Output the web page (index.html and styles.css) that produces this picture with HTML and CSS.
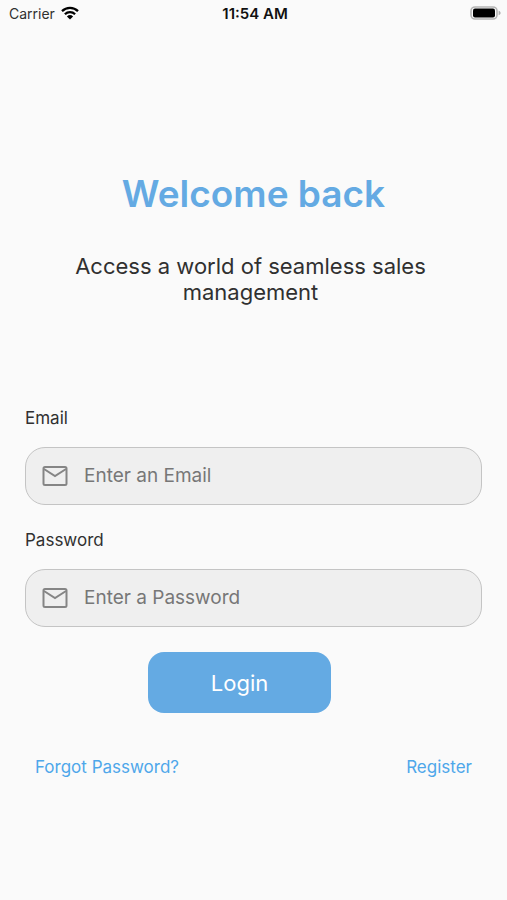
FILE: index.html
```html
<!DOCTYPE html>
<html lang="en">
<head>
<meta charset="utf-8">
<meta name="viewport" content="width=device-width, initial-scale=1">
<title>Login</title>
<link rel="stylesheet" href="styles.css">
</head>
<body>
<header class="status">
  <div class="status-side">
    <span>Carrier</span>
    <svg class="wifi" viewBox="0 0 18 14" aria-hidden="true">
      <path d="M1 5.2a11.5 11.5 0 0 1 16 0M3.9 8.2a7.3 7.3 0 0 1 10.2 0" fill="none" stroke="#000" stroke-width="2.3"/>
      <path d="M9 13.6 5.9 10.5a4.5 4.5 0 0 1 6.2 0Z" fill="#000"/>
    </svg>
  </div>
  <span class="status-time">11:54 AM</span>
  <div class="status-side status-right">
    <svg class="battery" viewBox="0 0 31 14" aria-hidden="true">
      <rect x="1" y="1" width="26" height="12" rx="4" fill="#fafafa" stroke="#b5b5b5" stroke-width="1.6"/>
      <rect x="3" y="2.5" width="22" height="9" rx="2" fill="#000"/>
      <path d="M28.6 4.8c1.4.4 2 1.200 2 2.200s-.6 1.800-2 2.200Z" fill="#b0b0b0"/>
    </svg>
  </div>
</header>
<main class="page">
  <h1 class="title">Welcome back</h1>
  <p class="subtitle">Access a world of seamless sales management</p>
  <form class="form">
    <label class="label" for="email">Email</label>
    <div class="field">
      <svg class="mail" viewBox="0 0 26 22" aria-hidden="true"><rect x="1.500" y="2" width="23" height="18" rx="1.500"/><path d="m2 4 11 7 11-7"/></svg>
      <input class="input" id="email" type="email" placeholder="Enter an Email">
    </div>
    <label class="label" for="password">Password</label>
    <div class="field">
      <svg class="mail" viewBox="0 0 26 22" aria-hidden="true"><rect x="1.500" y="2" width="23" height="18" rx="1.500"/><path d="m2 4 11 7 11-7"/></svg>
      <input class="input" id="password" type="password" placeholder="Enter a Password">
    </div>
    <button class="login" type="submit">Login</button>
  </form>
  <nav class="links">
    <a href="#forgot">Forgot Password?</a>
    <a href="#register">Register</a>
  </nav>
</main>
</body>
</html>
```
FILE: styles.css
```css
* {
  box-sizing: border-box;
}

body {
  margin: 0;
  min-height: 100vh;
  background: #fafafa;
  color: #303030;
  font-family: Inter, "Liberation Sans", sans-serif;
}

.status {
  display: flex;
  align-items: center;
  height: 26px;
  padding: 0 6px 0 9px;
  font-size: 14px;
}

.status-side {
  display: flex;
  flex: 1;
  align-items: center;
  gap: 6px;
}

.status-right {
  justify-content: flex-end;
}

.status-time {
  color: #111;
  font-size: 15px;
  font-weight: 600;
}

.wifi {
  width: 18px;
  height: 14px;
}

.battery {
  width: 31px;
  height: 14px;
}

.page {
  padding: 145px 25px 32px;
}

.title {
  margin: 0;
  color: #64aae3;
  font-size: 37px;
  font-weight: 600;
  line-height: 46px;
  text-align: center;
}

.subtitle {
  margin: 36px 30px 0 24px;
  font-size: 22px;
  line-height: 26px;
  text-align: center;
}

.form {
  display: flex;
  flex-direction: column;
  margin-top: 101px;
}

.label {
  font-size: 17px;
  line-height: 24px;
}

.field {
  display: flex;
  align-items: center;
  gap: 16px;
  height: 58px;
  margin: 17px 0 23px;
  padding: 0 16px;
  border: 1px solid #c4c4c4;
  border-radius: 20px;
  background: #efefef;
}

.field:focus-within {
  border-color: #64aae3;
}

.mail {
  flex: none;
  width: 26px;
  height: 22px;
  fill: none;
  stroke: #858585;
  stroke-width: 2;
}

.input {
  flex: 1;
  min-width: 0;
  padding: 0;
  border: 0;
  outline: 0;
  background: transparent;
  color: #303030;
  font: inherit;
  font-size: 19px;
  line-height: 28px;
}

.input::placeholder {
  color: #777;
  opacity: 1;
}

.login {
  align-self: center;
  width: 40%;
  height: 61px;
  margin: 2px 28px 0 0;
  border: 0;
  border-radius: 16px;
  background: #64aae3;
  color: #fff;
  font: inherit;
  font-size: 22px;
}

.links {
  display: flex;
  justify-content: space-between;
  margin-top: 42px;
  padding: 0 10px;
  font-size: 17px;
  line-height: 24px;
}

.links a {
  color: #4ea7ea;
  text-decoration: none;
}
```
